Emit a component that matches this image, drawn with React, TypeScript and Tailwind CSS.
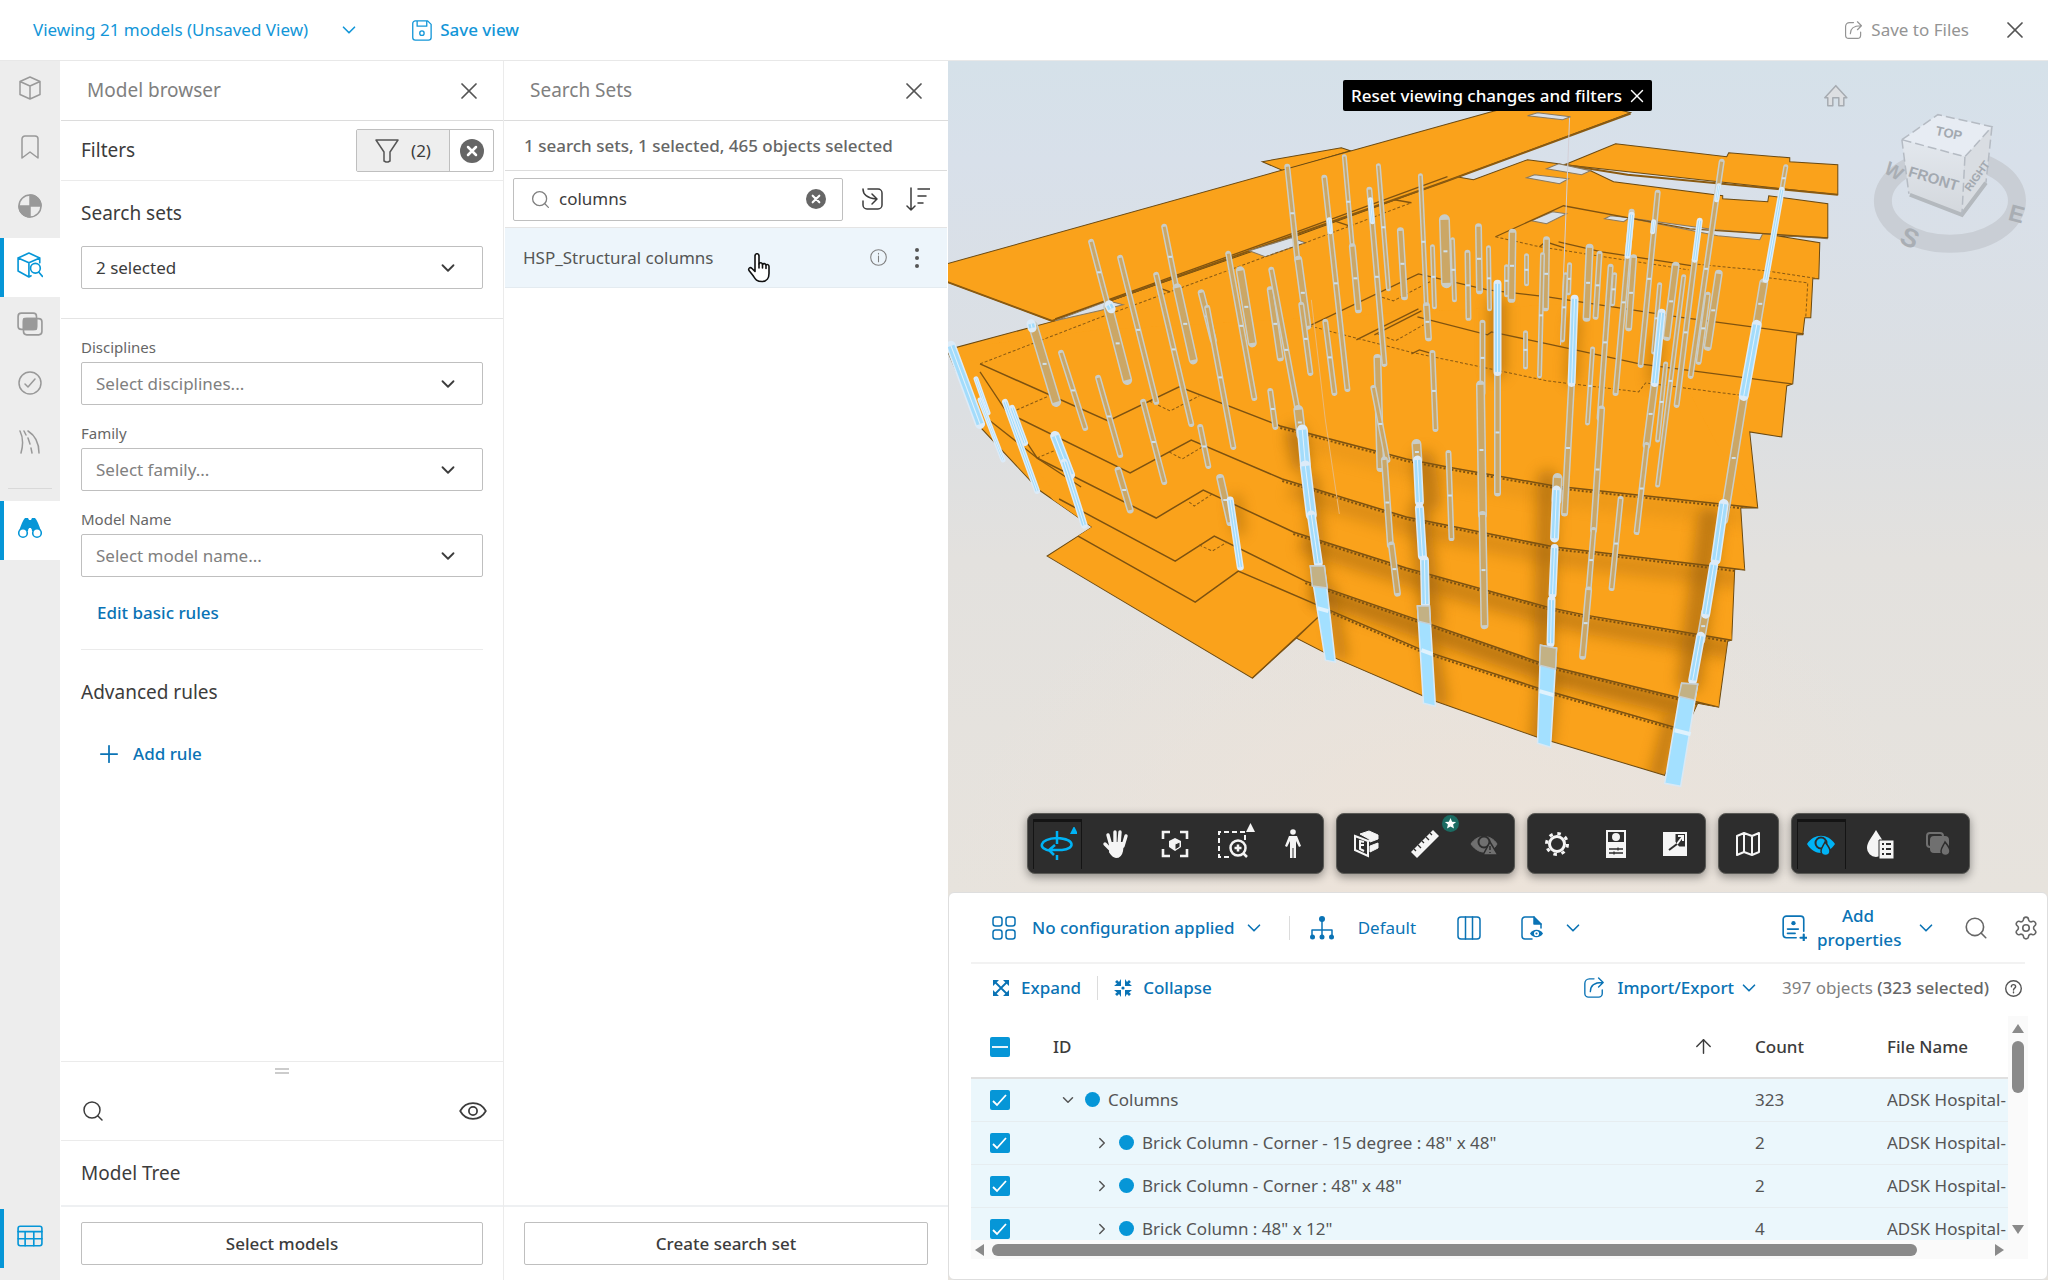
import React, { useState } from 'react';
import { ArrowUp, ChevronDown, ChevronRight, Plus, Search, Settings, X } from 'lucide-react';

type Point = [number, number];
// x1, y1, x2, y2, width
type Column = [number, number, number, number, number];

const toPoints = (points: Point[]) => points.map((p) => p.join(',')).join(' ');

const body: Point[] = [
  [948, 350], [1056, 321], [1250, 251], [1448, 180], [1457, 177], [1474, 180], [1528, 160], [1559, 164], [1591, 171], [1614, 182], [1723, 196], [1723, 199], [1768, 202], [1769, 196],
  [1828, 204], [1828, 238], [1777, 236], [1820, 243], [1819, 279], [1813, 279], [1811, 318], [1805, 318], [1803, 335],
  [1797, 335], [1793, 384], [1787, 386], [1782, 437], [1750, 432], [1758, 508], [1741, 508], [1745, 570],
  [1735, 569], [1732, 640], [1728, 641], [1719, 707], [1698, 703], [1665, 775], [1538, 737], [1436, 701],
  [1336, 658], [1297, 638], [1253, 678], [1048, 556], [1093, 527], [1040, 490], [981, 427],
];

const floors: Point[][] = [
  [[1079, 536], [1196, 602], [1239, 571], [1323, 607], [1423, 650], [1539, 688], [1678, 728], [1690, 725]],
  [[1060, 499], [1176, 561], [1215, 536], [1306, 581], [1419, 620], [1551, 666], [1719, 707]],
  [[1038, 458], [1157, 518], [1204, 490], [1294, 532], [1407, 568], [1548, 607], [1586, 615], [1732, 640]],
  [[1013, 415], [1131, 473], [1192, 440], [1283, 479], [1407, 517], [1555, 547], [1745, 570]],
  [[981, 364], [1109, 421], [1180, 387], [1281, 426], [1407, 459], [1448, 467], [1555, 486], [1758, 508]],
];

const holes: Point[][] = [
  [[1250, 251], [1292, 238], [1306, 243], [1266, 257]],
  [[1056, 321], [1109, 301], [1124, 305], [1100, 311]],
  [[1547, 169], [1559, 164], [1591, 171], [1582, 175]],
  [[1528, 116], [1538, 113], [1571, 117], [1563, 120]],
  [[1527, 178], [1535, 175], [1569, 179], [1560, 184]],
  [[1532, 221], [1553, 212], [1567, 214], [1547, 224]],
  [[1605, 219], [1611, 216], [1630, 218], [1624, 222]],
  [[1628, 218], [1716, 230], [1828, 239], [1763, 234], [1760, 240], [1718, 236]],
];

const edges: Point[][] = [
  [[1310, 326], [1419, 274], [1488, 290], [1548, 297], [1678, 317], [1804, 334]],
  [[1357, 340], [1419, 309]],
  [[1375, 335], [1422, 311]],
  [[1418, 317], [1488, 335], [1492, 332], [1548, 344], [1640, 364], [1792, 384]],
  [[1496, 237], [1564, 206], [1640, 220], [1690, 229], [1828, 238]],
  [[1559, 242], [1602, 252], [1693, 266]],
  [[1540, 247], [1546, 242], [1565, 248]],
  [[981, 372], [1038, 458], [1082, 487]],
  [[990, 420], [1038, 458]],
  [[1056, 319], [1292, 234], [1448, 177]],
  [[1395, 200], [1412, 203]],
  [[1335, 221], [1350, 226]],
  [[1157, 287], [1171, 292]],
  [[1412, 354], [1420, 350], [1430, 353]],
  [[1253, 678], [1323, 613], [1297, 638]],
];

const dashes: Point[][] = [
  [[981, 364], [1100, 318], [1266, 257], [1306, 243], [1412, 203]],
  [[1310, 326], [1410, 352], [1548, 381], [1639, 392], [1646, 383], [1746, 396]],
  [[1013, 412], [1050, 396]],
  [[1150, 401], [1171, 411], [1200, 396]],
  [[1038, 458], [1064, 447]],
  [[1170, 452], [1183, 459], [1203, 447]],
  [[1190, 502], [1195, 506], [1213, 494]],
  [[1200, 545], [1213, 551], [1228, 542]],
  [[1496, 237], [1540, 247], [1689, 270]],
  [[1693, 264], [1766, 271], [1819, 279]],
  [[1769, 278], [1808, 283], [1806, 317]],
  [[1378, 296], [1394, 301], [1436, 279]],
  [[1378, 334], [1396, 341], [1424, 325]],
];

const columns: Column[] = [
  [1092, 242, 1108, 303, 5], [1109, 307, 1128, 380, 9], [1121, 258, 1157, 402, 5], [1165, 227, 1177, 287, 5],
  [1178, 288, 1194, 360, 8], [1157, 275, 1192, 424, 5], [1034, 326, 1057, 402, 9], [1062, 353, 1086, 428, 5],
  [1099, 378, 1121, 455, 5], [1144, 402, 1165, 482, 5], [1202, 293, 1214, 340, 6], [1208, 308, 1234, 447, 5],
  [1229, 254, 1255, 398, 5], [1241, 271, 1253, 343, 8], [1271, 290, 1281, 358, 6], [1272, 270, 1302, 430, 5],
  [1288, 167, 1298, 260, 5], [1299, 260, 1308, 326, 7], [1302, 305, 1311, 373, 5], [1325, 178, 1348, 389, 5],
  [1345, 157, 1353, 247, 4], [1353, 247, 1359, 310, 6], [1370, 190, 1385, 364, 5], [1379, 166, 1389, 289, 4],
  [1421, 176, 1427, 308, 4], [1427, 306, 1429, 338, 6], [1401, 231, 1405, 297, 6], [1445, 220, 1447, 283, 10],
  [1433, 247, 1435, 307, 4], [1453, 240, 1455, 300, 4], [1479, 227, 1480, 291, 6], [1468, 253, 1469, 318, 5],
  [1489, 248, 1490, 309, 4], [1513, 233, 1512, 299, 7], [1507, 267, 1507, 295, 4], [1527, 256, 1527, 284, 4],
  [1498, 372, 1498, 493, 6], [1483, 323, 1483, 393, 5], [1481, 385, 1483, 515, 8], [1483, 515, 1485, 625, 7],
  [1526, 333, 1526, 367, 4], [1433, 353, 1436, 429, 5], [1378, 358, 1381, 468, 7], [1374, 388, 1388, 460, 5],
  [1385, 460, 1391, 545, 6], [1392, 545, 1398, 593, 6], [1326, 322, 1335, 393, 5], [1271, 391, 1276, 427, 5],
  [1201, 427, 1209, 466, 5], [1119, 470, 1131, 510, 6], [1221, 478, 1231, 522, 7], [1722, 162, 1691, 376, 5],
  [1658, 193, 1641, 365, 5], [1632, 212, 1616, 393, 5], [1695, 260, 1677, 405, 5], [1634, 258, 1629, 328, 6],
  [1676, 266, 1667, 337, 7], [1719, 274, 1708, 347, 7], [1590, 248, 1587, 318, 7], [1600, 254, 1596, 317, 5],
  [1611, 267, 1600, 418, 5], [1615, 275, 1613, 304, 4], [1547, 240, 1546, 308, 6], [1543, 255, 1540, 376, 4],
  [1570, 265, 1569, 293, 4], [1566, 275, 1563, 340, 4], [1572, 383, 1565, 513, 6], [1655, 383, 1647, 445, 7],
  [1647, 445, 1637, 532, 5], [1660, 285, 1654, 352, 4], [1684, 277, 1658, 485, 4], [1708, 295, 1699, 362, 5],
  [1666, 364, 1658, 440, 4], [1593, 349, 1588, 423, 4], [1602, 409, 1594, 530, 6], [1594, 530, 1589, 590, 5],
  [1589, 590, 1583, 656, 6], [1621, 499, 1612, 588, 5], [1449, 453, 1452, 538, 5], [1299, 410, 1302, 435, 9],
  [1417, 444, 1418, 460, 9], [1558, 478, 1557, 500, 9], [1764, 283, 1757, 325, 8], [1744, 396, 1724, 520, 8],
  [1786, 167, 1782, 190, 4], [1706, 612, 1701, 640, 8],
];

const glowing: Column[] = [
  [952, 346, 981, 424, 9], [977, 379, 989, 413, 4], [981, 400, 1004, 460, 4], [1006, 402, 1038, 491, 5],
  [1013, 408, 1026, 443, 5], [1056, 436, 1071, 475, 9], [1065, 462, 1085, 525, 6], [1231, 500, 1241, 567, 6],
  [1303, 430, 1306, 464, 10], [1306, 466, 1312, 515, 10], [1312, 515, 1319, 563, 8], [1418, 460, 1420, 502, 8],
  [1420, 508, 1423, 556, 8], [1425, 560, 1426, 604, 8], [1557, 490, 1555, 538, 8], [1555, 548, 1553, 594, 7],
  [1552, 600, 1551, 643, 7], [1498, 284, 1498, 372, 7], [1575, 299, 1572, 383, 7], [1662, 313, 1655, 383, 7],
  [1700, 221, 1695, 260, 5], [1632, 215, 1628, 256, 5], [1330, 220, 1331, 232, 4], [1371, 200, 1373, 222, 4],
  [1782, 190, 1766, 280, 5], [1757, 325, 1744, 396, 9], [1724, 504, 1716, 560, 9], [1714, 565, 1706, 614, 8],
  [1701, 636, 1693, 680, 8], [1719, 186, 1717, 200, 4], [1654, 222, 1653, 232, 4], [1110, 305, 1112, 309, 8],
  [1032, 324, 1033, 328, 8],
];

const feet: Point[][] = [
  [[1311, 566], [1325, 566], [1336, 662], [1326, 660]],
  [[1418, 606], [1430, 606], [1436, 706], [1424, 703]],
  [[1541, 645], [1557, 648], [1551, 747], [1538, 743]],
  [[1682, 683], [1698, 684], [1681, 786], [1665, 783]],
];

const caps: Point[][] = [
  [[1311, 566], [1325, 566], [1328, 588], [1313, 586]],
  [[1418, 606], [1430, 606], [1431, 624], [1419, 621]],
  [[1541, 645], [1557, 648], [1556, 669], [1540, 665]],
  [[1682, 683], [1698, 684], [1695, 700], [1679, 696]],
];

const shadows: Column[] = [
  [1297, 435, 1302, 462, 20], [1424, 462, 1430, 500, 22], [1420, 510, 1432, 620, 20], [1312, 480, 1322, 600, 14],
  [1548, 480, 1544, 660, 20], [1710, 520, 1690, 680, 24], [1498, 305, 1498, 370, 16], [1330, 590, 1342, 655, 12],
  [1430, 640, 1440, 700, 16], [1548, 680, 1542, 740, 22], [1672, 720, 1658, 775, 16], [1236, 500, 1240, 530, 10],
  [1575, 320, 1572, 380, 10], [1658, 340, 1654, 380, 10],
];

const Scene: React.FC = () => {
  return (
    <svg className="block h-full w-full" viewBox="949 61 1099 831" preserveAspectRatio="xMidYMid slice" aria-hidden="true">
      <defs>
        <linearGradient id="sky" x1="0" y1="0" x2="0" y2="1">
          <stop offset="0" stopColor="#d5e1e9" />
          <stop offset="0.12" stopColor="#d8e0ea" />
          <stop offset="0.42" stopColor="#dcdfe2" />
          <stop offset="0.6" stopColor="#e3e1de" />
          <stop offset="1" stopColor="#e7e3dd" />
        </linearGradient>
        <radialGradient id="warm" cx="0.45" cy="1" r="0.45">
          <stop offset="0" stopColor="#ede3d9" />
          <stop offset="1" stopColor="#ede3d9" stopOpacity="0" />
        </radialGradient>
        <clipPath id="bodyClip">
          <polygon points={toPoints(body)} />
        </clipPath>
        <filter id="soft" filterUnits="userSpaceOnUse" x="949" y="61" width="1099" height="831">
          <feGaussianBlur stdDeviation="7" />
        </filter>
        <linearGradient id="face" x1="0" y1="0" x2="0" y2="1">
          <stop offset="0" stopColor="#e3e8ee" />
          <stop offset="1" stopColor="#d3d7dc" />
        </linearGradient>
      </defs>
      <rect x="949" y="61" width="1099" height="831" fill="url(#sky)" />
      <rect x="949" y="61" width="1099" height="831" fill="url(#warm)" />

      <g fill="#faa21b" stroke="#6b4a12" strokeWidth="1">
        <polygon points="1263,162 1342,148 1351,151 1284,171" />
        <polygon points={toPoints(body)} />
      </g>
      <g clipPath="url(#bodyClip)">
        {floors.map((line, i) => (
          <g key={i}>
            {i > 0 && (
              <polyline points={toPoints(line.slice(3))} transform="translate(8 10)" fill="none" stroke="#a8690c" strokeWidth="20" opacity={0.95 - i * 0.2} filter="url(#soft)" />
            )}
            <polygon points={toPoints([...line, [1715, 440], [1640, 300], [1100, 330], [948, 350]])} fill="#faa21b" />
          </g>
        ))}
        <g filter="url(#soft)" stroke="#9c620c" strokeLinecap="round" opacity="0.6">
          {shadows.map(([x1, y1, x2, y2, w], i) => (
            <line key={i} x1={x1} y1={y1} x2={x2} y2={y2} strokeWidth={w} />
          ))}
        </g>
        <g fill="none" stroke="#7d5210" strokeWidth="1.5">
          {floors.map((line, i) => (
            <polyline key={i} points={toPoints(line)} />
          ))}
        </g>
        <g fill="none" stroke="#7d5210" strokeWidth="2" strokeDasharray="2 2">
          {floors.map((line, i) => (
            <polyline key={i} points={toPoints(line.slice(3))} transform="translate(0 2)" />
          ))}
        </g>
      </g>
      <polygon points="948,264 1492,112 1560,95 1631,113 1448,181 1292,238 1053,321 948,282" fill="#faa21b" stroke="#6b4a12" strokeWidth="1" />
      <polyline points="948,282 1053,321 1448,181 1631,114" fill="none" stroke="#8a5a10" strokeWidth="2" />
      <polygon points="1565,165 1616,144 1727,157 1729,153 1790,158 1790,162 1838,165 1838,195" fill="#faa21b" stroke="#6b4a12" strokeWidth="1" />
      <polyline points="1565,165 1628,175 1838,195" fill="none" stroke="#8a5a10" strokeWidth="2" />
      <g fill="#d9e0e8" stroke="#8a7a60" strokeWidth="1">
        {holes.map((hole, i) => (
          <polygon key={i} points={toPoints(hole)} />
        ))}
      </g>
      <g fill="none" stroke="#80530f" strokeWidth="1.3">
        {edges.map((line, i) => (
          <polyline key={i} points={toPoints(line)} />
        ))}
      </g>
      <g fill="none" stroke="#8a5a12" strokeWidth="1" strokeDasharray="3 2">
        {dashes.map((line, i) => (
          <polyline key={i} points={toPoints(line)} />
        ))}
      </g>
      <polyline points="1312,300 1326,420 1340,514" fill="none" stroke="#e8b878" strokeWidth="1" />
      <polyline points="1570,118 1565,250 1561,345" fill="none" stroke="#d3cfd6" strokeWidth="1" />

      {columns.map(([x1, y1, x2, y2, w], i) => (
        <g key={i}>
          <line x1={x1} y1={y1} x2={x2} y2={y2} stroke="#c9cdc8" strokeWidth={w + 1} strokeLinecap="round" />
          <line x1={x1} y1={y1} x2={x2} y2={y2} stroke="#cba766" strokeWidth={w - 2} />
          <line x1={(x1 + x2) / 2 - 2} y1={(y1 + y2) / 2} x2={(x1 + x2) / 2 + 2} y2={(y1 + y2) / 2} stroke="#cfe0ec" strokeWidth="2" />
        </g>
      ))}
      {glowing.map(([x1, y1, x2, y2, w], i) => (
        <g key={i}>
          <line x1={x1} y1={y1} x2={x2} y2={y2} stroke="#dcebf8" strokeWidth={w + 1} strokeLinecap="round" />
          <line x1={x1} y1={y1} x2={x2} y2={y2} stroke="#a3dcfb" strokeWidth={w - 2} />
          <line x1={x1} y1={y1} x2={x2} y2={y2} stroke="#e2f2fd" strokeWidth="1" />
        </g>
      ))}
      <g fill="#a3e0ff" stroke="#d9e9f5" strokeWidth="1.5">
        {feet.map((foot, i) => (
          <polygon key={i} points={toPoints(foot)} />
        ))}
      </g>
      <g fill="#c3b184" stroke="#c6cfd4" strokeWidth="1.5">
        {caps.map((cap, i) => (
          <polygon key={i} points={toPoints(cap)} />
        ))}
      </g>
      <path d="M1318 608l11 3M1422 650l11 4M1540 691l14 4M1675 730l16 4" stroke="#dff2fd" strokeWidth="4" />

      <g>
        <path d="M1825 98l11-12 11 12h-3v8h-5v-8h-6v8h-5v-8z" fill="#dddfe2" stroke="#a6abb1" strokeWidth="1.5" strokeLinejoin="round" />
        <ellipse cx="1950" cy="201" rx="67" ry="43" fill="none" stroke="#c9ced5" strokeWidth="18" />
        <g fill="#a9aeb4" fontFamily="Liberation Sans, sans-serif" fontWeight="bold" textAnchor="middle">
          <text x="1895" y="178" fontSize="19" transform="rotate(30 1895 170)">W</text>
          <text x="1910" y="247" fontSize="26" transform="rotate(25 1910 238)">S</text>
          <text x="2017" y="222" fontSize="23" transform="rotate(15 2017 213)">E</text>
        </g>
        <polygon points="1902,140 1965,157 1962,216 1909,194" fill="url(#face)" />
        <polygon points="1992,127 1965,157 1962,216 1986,183" fill="#d9dde2" />
        <polygon points="1938,115 1992,127 1965,157 1902,140" fill="#e7ecf3" />
        <path d="M1910 195l52 20 24-32" fill="none" stroke="#b4b9be" strokeWidth="4" />
        <path d="M1902 140l36-25 54 12-27 30zM1965 157l-3 58M1902 140l7 54M1992 127l-6 56" fill="none" stroke="#b5bbc3" strokeWidth="1.5" strokeDasharray="9 4" />
        <g fill="#a3a9b0" fontFamily="Liberation Sans, sans-serif" fontWeight="bold" textAnchor="middle">
          <text x="1949" y="138" fontSize="13" transform="rotate(12 1949 134)">TOP</text>
          <text x="1934" y="184" fontSize="15" transform="rotate(17 1934 178)">FRONT</text>
          <text x="1977" y="180" fontSize="11" transform="rotate(-54 1977 176)">RIGHT</text>
        </g>
      </g>
    </svg>
  );
};

interface IconProps {
  size?: number;
  className?: string;
  children: React.ReactNode;
}

const Icon: React.FC<IconProps> = ({ size = 24, className = '', children }) => (
  <svg width={size} height={size} viewBox="0 0 24 24" fill="none" stroke="currentColor" strokeWidth="1.5" strokeLinecap="round" strokeLinejoin="round" className={`shrink-0 ${className}`} aria-hidden="true">
    {children}
  </svg>
);

const ShareIcon = ({ size = 20 }: { size?: number }) => (
  <Icon size={size}>
    <path d="M12 2H7a5 5 0 0 0-5 5v11a4 4 0 0 0 4 4h11a4 4 0 0 0 4-4v-4M8 16c0-6 4-10 13-10M17 1l5 5-5 5" />
  </Icon>
);

const ClearIcon = ({ size = 20 }: { size?: number }) => (
  <svg width={size} height={size} viewBox="0 0 24 24" aria-hidden="true">
    <circle cx="12" cy="12" r="12" fill="#666" />
    <path d="M8 8l8 8M16 8l-8 8" stroke="#fff" strokeWidth="2.5" strokeLinecap="round" />
  </svg>
);

const sideItems = [
  { name: 'Models', active: false, icon: <Icon><path d="M12 1l10 4.500v13L12 23 2 18.500v-13zM2 5.500l10 4.500 10-4.500M12 10v13" /></Icon> },
  { name: 'Views', active: false, icon: <Icon><path d="M4 23V4a3 3 0 0 1 3-3h10a3 3 0 0 1 3 3v19l-8-6z" /></Icon> },
  { name: 'Issues', active: false, icon: <Icon><circle cx="12" cy="12" r="11" /><path d="M12 1a11 11 0 0 1 11 11H12zM12 23A11 11 0 0 1 1 12h11z" fill="currentColor" /></Icon> },
  { name: 'Model browser', active: true, icon: <Icon size={26}><path d="M21 10V5.500L11 1 1 5.500v12L11 23l2-1M1 5.500L11 10l10-4.500M11 10v13" /><circle cx="17" cy="15" r="4.500" /><path d="M20 18.500l3.500 4" /></Icon> },
  { name: 'Clashes', active: false, icon: <Icon size={26}><rect x="1" y="2" width="17" height="15" rx="3" /><rect x="6" y="7" width="17" height="15" rx="3" /><rect x="6" y="7" width="12" height="10" rx="1" fill="currentColor" /></Icon> },
  { name: 'Checks', active: false, icon: <Icon><circle cx="12" cy="12" r="11" /><path d="M7 13l3 3 7-8" /></Icon> },
  { name: 'Alignments', active: false, icon: <Icon><path d="M2 1c3 6 3 15 1 22M10 1c8 5 11 13 11 22M6 1l2 4M10 8l2 6M13 18l1 5" /></Icon> },
];

const SideBar: React.FC = () => {
  return (
    <nav className="flex w-[60px] shrink-0 flex-col bg-[#ededed] text-[#999]">
      {sideItems.map((item) => (
        <button
          key={item.name}
          aria-label={item.name}
          className={item.active
            ? 'flex h-[59px] w-full items-center justify-center border-l-4 border-[#0696d7] bg-white pr-1 pb-1.5 text-[#0696d7]'
            : 'flex h-[59px] w-full items-center justify-center pb-1.5'}
        >
          {item.icon}
        </button>
      ))}
      <hr className="mx-2 mt-3.5 mb-3 border-[#d9d9d9]" />
      <button aria-label="Search sets" className="flex h-[59px] w-full items-center justify-center border-l-4 border-[#0696d7] bg-white pr-1 pb-1.5 text-[#0696d7]">
        <svg width="24" height="22" viewBox="0 0 24 22" fill="currentColor" aria-hidden="true">
          <path d="M7 1h3l1 2h2l1-2h3c2 2 4 7 6 13H14l-1-3h-2l-1 3H1C3 8 5 3 7 1z" />
          <circle cx="5" cy="16" r="4.300" fill="#fff" stroke="currentColor" strokeWidth="1.600" />
          <circle cx="19" cy="16" r="4.300" fill="#fff" stroke="currentColor" strokeWidth="1.600" />
          <rect x="10.500" y="12" width="3" height="2" fill="#fff" />
        </svg>
      </button>
      <button aria-label="Data table" className="mt-auto mb-3 flex h-[59px] w-full items-center justify-center border-l-4 border-[#0696d7] pr-1 pb-1.5 text-[#0696d7]">
        <Icon size={26}>
          <rect x="1" y="3" width="22" height="18" rx="2" />
          <path d="M1 8h22M1 14.500h22M7.500 8v13M15.500 8v13" />
        </Icon>
      </button>
    </nav>
  );
};

const Dropdown = ({ id, label, value, filled = false }: { id: string; label: string; value: string; filled?: boolean }) => (
  <div className="relative">
    <select
      id={id}
      aria-label={label}
      className={filled
        ? 'block h-[43px] w-full appearance-none rounded-xs border border-[#bfbfbf] bg-white px-3.5 text-[17px] text-[#3c3c3c]'
        : 'block h-[43px] w-full appearance-none rounded-xs border border-[#bfbfbf] bg-white px-3.5 text-[17px] text-[#808080]'}
    >
      <option>{value}</option>
    </select>
    <ChevronDown size={22} strokeWidth={2} className="pointer-events-none absolute top-[11px] right-6 text-[#3c3c3c]" />
  </div>
);

const PanelHeader = ({ title }: { title: string }) => (
  <div className="flex h-[60px] shrink-0 items-center justify-between border-b border-[#dcdcdc] pr-5 pl-[26px]">
    <h2 className="text-[19px] text-[#808080]">{title}</h2>
    <button aria-label={`Close ${title}`} className="text-[#555]">
      <X size={28} strokeWidth={1.5} />
    </button>
  </div>
);

const ModelBrowser: React.FC = () => {
  return (
    <section className="flex w-[444px] shrink-0 flex-col border-r border-[#ebebeb] pl-px text-[#3c3c3c]">
      <PanelHeader title="Model browser" />
      <div className="flex h-[60px] shrink-0 items-center justify-between border-b border-[#ebebeb] pr-[9px] pl-5">
        <h3 className="text-[19px]">Filters</h3>
        <div className="flex h-[43px] w-[138px] overflow-hidden rounded-xs border border-[#bfbfbf]">
          <button className="flex flex-1 items-center justify-center gap-3 border-r border-[#bfbfbf] bg-[#eee] text-[17px]">
            <Icon className="text-[#555]"><path d="M1 1h22l-8 12v9l-2 1h-2l-2-1v-9z" /></Icon>
            (2)
          </button>
          <button aria-label="Clear filters" className="flex w-[43px] items-center justify-center">
            <ClearIcon size={24} />
          </button>
        </div>
      </div>
      <div className="border-b border-[#e4e4e4] px-5 pt-[18px] pb-[29px]">
        <label htmlFor="search-sets" className="mb-[19px] block text-[19px] leading-7">Search sets</label>
        <Dropdown id="search-sets" label="Search sets" value="2 selected" filled />
      </div>
      <div className="mx-5 border-b border-[#ebebeb] pt-4">
        <label htmlFor="disciplines" className="block pb-[3px] text-[15px] leading-6 text-[#666]">Disciplines</label>
        <Dropdown id="disciplines" label="Disciplines" value="Select disciplines..." />
        <label htmlFor="family" className="mt-4 block pb-[3px] text-[15px] leading-6 text-[#666]">Family</label>
        <Dropdown id="family" label="Family" value="Select family..." />
        <label htmlFor="model-name" className="mt-4 block pb-[3px] text-[15px] leading-6 text-[#666]">Model Name</label>
        <Dropdown id="model-name" label="Model Name" value="Select model name..." />
        <button className="mt-6 mb-6 ml-4 block text-[17px] leading-6 font-medium text-[#0a73b5]">Edit basic rules</button>
      </div>
      <h3 className="px-5 pt-[28px] text-[19px] leading-7">Advanced rules</h3>
      <button className="mt-[34px] ml-[34px] flex items-center gap-2.5 text-[17px] leading-6 font-medium text-[#0a73b5]">
        <Plus size={28} strokeWidth={1.5} />
        Add rule
      </button>
      <div className="mt-auto flex flex-col items-center border-t border-[#ebebeb]">
        <div className="mt-1.5 h-1.5 w-3.5 border-y-2 border-[#ccc]" />
        <div className="flex h-[67px] w-full items-center justify-between border-b border-[#ebebeb] px-5 pt-2">
          <button aria-label="Search models"><Search size={24} strokeWidth={1.5} /></button>
          <button aria-label="Toggle visibility" className="-mr-1">
            <Icon size={28}><path d="M1 12c5-9 17-9 22 0-5 9-17 9-22 0z" /><circle cx="12" cy="12" r="3.500" /></Icon>
          </button>
        </div>
        <h3 className="flex h-[64px] w-full items-center px-5 text-[19px]">Model Tree</h3>
      </div>
      <div className="flex h-[75px] shrink-0 items-start border-t-2 border-[#eef0f2] px-5 pt-[15px]">
        <button className="h-[43px] w-full rounded-xs border border-[#bfbfbf] text-[17px] font-medium">Select models</button>
      </div>
    </section>
  );
};

const SearchSets: React.FC = () => {
  const [query, setQuery] = useState('columns');
  return (
    <section className="flex w-[444px] shrink-0 flex-col text-[#3c3c3c]">
      <PanelHeader title="Search Sets" />
      <p className="mx-px flex h-[50px] shrink-0 items-center border-b border-[#dcdcdc] pl-[19px] text-[17px] font-medium text-[#666]">
        1 search sets, 1 selected, 465 objects selected
      </p>
      <div className="mx-px flex h-[57px] shrink-0 items-center border-b border-[#e4e4e4] pr-[17px] pl-2">
        <div className="flex h-[43px] w-[330px] items-center gap-2 rounded-xs border border-[#bfbfbf] px-4">
          <Search size={21} strokeWidth={1.5} className="text-[#808080]" />
          <input
            aria-label="Search sets filter"
            value={query}
            onChange={(e) => setQuery(e.target.value)}
            className="min-w-0 flex-1 text-[17px] outline-none"
          />
          <button aria-label="Clear search" onClick={() => setQuery('')}>
            <ClearIcon />
          </button>
        </div>
        <div className="ml-auto flex gap-[22px]">
          <button aria-label="Import search set">
            <Icon><path d="M3 2c0 6 4 9 13 10M12 7l5 5-5 5M8 2h10a4 4 0 0 1 4 4v12a4 4 0 0 1-4 4H7a4 4 0 0 1-4-4v-4" /></Icon>
          </button>
          <button aria-label="Sort">
            <Icon><path d="M5 1v22M1 19l4 4 4-4M12 2h12M12 9h8M12 16h5" /></Icon>
          </button>
        </div>
      </div>
      <div className="relative mx-px flex h-[60px] shrink-0 items-center border-b border-[#e4ebf0] bg-[#edf5fb] pr-6 pl-[18px]">
        <span className="flex-1 text-[17px] text-[#555]">HSP_Structural columns</span>
        <button aria-label="Info" className="mr-6 text-[#808080]">
          <Icon size={17}><circle cx="12" cy="12" r="11" /><path d="M12 10v8M12 6v1" /></Icon>
        </button>
        <button aria-label="More" className="px-1">
          <svg width="4" height="20" viewBox="0 0 4 20" fill="#555" aria-hidden="true">
            <circle cx="2" cy="2" r="2" /><circle cx="2" cy="10" r="2" /><circle cx="2" cy="18" r="2" />
          </svg>
        </button>
        <svg className="absolute top-[25px] left-[242px]" width="24" height="30" viewBox="0 0 24 30" fill="#fff" stroke="#111" strokeWidth="1.600" strokeLinejoin="round" strokeLinecap="round" aria-hidden="true">
          <path d="M8 3c0-3 4-3 4 0v8c1-2 3-1.500 3.500.5 1-1.500 3-1 3.500.5 1-1 3-.5 3 1.500v7c0 4-2 8-7 8-6 0-7-3-9-6l-4-5c-1-2 1-4 3-2l3 3z" />
          <path d="M12 11v4M15.500 12v3M19 12.500v3" fill="none" />
        </svg>
      </div>
      <div className="mt-auto flex h-[75px] shrink-0 items-start border-t-2 border-[#eef0f2] px-5 pt-[15px]">
        <button className="h-[43px] w-full rounded-xs border border-[#bfbfbf] text-[17px] font-medium">Create search set</button>
      </div>
    </section>
  );
};

interface Tool {
  name: string;
  icon: React.ReactNode;
  state?: 'active' | 'disabled';
}

const toolGroups: Tool[][] = [
  [
    { name: 'Orbit', state: 'active', icon: <svg width="40" height="36" viewBox="0 0 40 36" fill="none" stroke="currentColor" strokeWidth="2.500" aria-hidden="true"><path d="M20 4v13M20 28v5M14 24C0 22 2 12 20 11c19 1 18 11 5 12h-11M18 18l-6 5 5 5" /><path d="M33 7l4-8 4 8z" fill="currentColor" stroke="none" /></svg> },
    { name: 'Pan', icon: <svg width="30" height="30" viewBox="0 0 30 30" fill="none" stroke="currentColor" strokeWidth="3.400" strokeLinecap="round" aria-hidden="true"><path d="M10 17L7 6M14 15V3M18 15l1-12M22 17l3-10M10 21l-6-6" /><path d="M10 14h12l-1 8c-1 5-3 6-6 6s-4-2-6-5z" fill="currentColor" strokeWidth="2" /></svg> },
    { name: 'Fit to view', icon: <svg width="30" height="30" viewBox="0 0 30 30" fill="none" stroke="currentColor" strokeWidth="2.600" aria-hidden="true"><path d="M3 10V3h7M20 3h7v7M27 20v7h-7M10 27H3v-7" /><path d="M15 9l6 3v6l-6 4-6-4v-6z" fill="currentColor" stroke="none" /><path d="M15 15v6l5-3v-5z" fill="#2d2d2d" stroke="currentColor" strokeWidth="1" /></svg> },
    { name: 'Zoom window', icon: <svg width="36" height="36" viewBox="0 0 36 36" fill="none" stroke="currentColor" strokeWidth="2" className="overflow-visible" aria-hidden="true"><path d="M13 31H3V6h26v9" strokeDasharray="5 3" /><circle cx="22" cy="22" r="7.500" strokeWidth="2.500" /><path d="M22 18.500v7M18.500 22h7M27 27l4 4" strokeWidth="2.500" /><path d="M30 6l4.500-9L39 6z" fill="currentColor" stroke="none" /></svg> },
    { name: 'First person', icon: <svg width="20" height="30" viewBox="0 0 20 30" fill="currentColor" aria-hidden="true"><circle cx="10" cy="3" r="2.800" /><path d="M6 7h8l4 10-2 1-3-6v17h-2.500V19h-1v10H7V12l-3 6-2-1z" /></svg> },
  ],
  [
    { name: 'Section', icon: <svg width="28" height="28" viewBox="0 0 28 28" fill="none" stroke="currentColor" strokeWidth="2" aria-hidden="true"><path d="M3 6l13 5v15L3 20z" /><path d="M12 12l-4-1v8l4 2M9 15h3" /><path d="M8 4l9-3 9 4v4l-8 3-1-3zM18 16l8-3v5l-8 4z" fill="currentColor" strokeWidth="1" /></svg> },
    { name: 'Measure', icon: <svg width="32" height="32" viewBox="0 0 32 32" aria-hidden="true"><path d="M2 24L24 2l6 6L8 30z" fill="currentColor" /><path d="M5 21l2 2M9 17l3 3M13 13l2 2M17 9l3 3M21 5l2 2" stroke="#2d2d2d" strokeWidth="1.300" /></svg> },
    { name: 'Show markups', state: 'disabled', icon: <svg width="30" height="24" viewBox="0 0 30 24" fill="none" stroke="currentColor" strokeWidth="3" aria-hidden="true"><path d="M2 12C8 2 22 2 28 12c-3 5-6 7-10 8-6 1-12-2-16-8z" fill="currentColor" strokeWidth="1" /><circle cx="15" cy="10" r="5.500" stroke="#2d2d2d" strokeWidth="2" /><path d="M21 10l8 13H14z" fill="currentColor" stroke="#2d2d2d" strokeWidth="1.500" /><path d="M21 14v4M21 20v1" stroke="#2d2d2d" strokeWidth="1.500" /></svg> },
  ],
  [
    { name: 'Settings', icon: <svg width="26" height="26" viewBox="0 0 26 26" fill="none" stroke="currentColor" aria-hidden="true"><circle cx="13" cy="13" r="7.500" strokeWidth="3" /><circle cx="13" cy="13" r="10.500" strokeWidth="3" strokeDasharray="3.500 4.750" /></svg> },
    { name: 'Properties', icon: <svg width="20" height="28" viewBox="0 0 20 28" fill="none" stroke="currentColor" strokeWidth="2" aria-hidden="true"><rect x="1" y="1" width="18" height="12" /><circle cx="10" cy="7" r="3" fill="currentColor" /><rect x="1" y="15" width="18" height="12" fill="currentColor" /><path d="M3 19h14M3 23h14M12 17.500v3M8 21.500v3" stroke="#2d2d2d" strokeWidth="1.300" /></svg> },
    { name: 'Full screen', icon: <svg width="24" height="24" viewBox="0 0 24 24" fill="none" stroke="currentColor" strokeWidth="2" aria-hidden="true"><rect x="1" y="1" width="22" height="22" /><path d="M1 1h11v9l4 5h7v8H1z" fill="currentColor" strokeWidth="1" /><path d="M14 12l6-8M15 4h5v5" /><path d="M6 18l8-6" stroke="#2d2d2d" /></svg> },
  ],
  [
    { name: 'Minimap', icon: <svg width="26" height="26" viewBox="0 0 26 26" fill="none" stroke="currentColor" strokeWidth="2" strokeLinejoin="round" aria-hidden="true"><path d="M2 5l7-3 8 3 7-3v19l-7 3-8-3-7 3zM9 2v19M17 5v19" /></svg> },
  ],
  [
    { name: 'Ghosting', state: 'active', icon: <svg width="30" height="24" viewBox="0 0 30 24" fill="none" aria-hidden="true"><path d="M1 11C8 0 22 0 29 11c-2 3-4 5-6 6-6 5-16 4-22-6z" fill="currentColor" /><circle cx="15" cy="10" r="5.500" stroke="#2d2d2d" strokeWidth="2" /><path d="M19 9c3 4 5 6 5 9a4.500 4.500 0 0 1-9 0c0-3 2-5 4-9z" fill="currentColor" stroke="#2d2d2d" strokeWidth="1.500" /></svg> },
    { name: 'Color theme', icon: <svg width="28" height="30" viewBox="0 0 28 30" fill="currentColor" aria-hidden="true"><path d="M10 1c4 7 9 12 9 18a9 9 0 0 1-18 0C1 13 6 8 10 1z" /><path d="M13 11h15v19H13z" stroke="#2d2d2d" /><path d="M16 15h2M20 15h5M16 20h2M20 20h5M16 25h2M20 25h5" stroke="#2d2d2d" strokeWidth="2" /></svg> },
    { name: 'Overlap', state: 'disabled', icon: <svg width="28" height="26" viewBox="0 0 28 26" fill="none" stroke="currentColor" strokeWidth="2" aria-hidden="true"><rect x="2" y="2" width="16" height="14" rx="3" /><rect x="6" y="6" width="17" height="15" rx="3" fill="currentColor" /><path d="M20 11c3 4 5 6 5 9a4.500 4.500 0 0 1-9 0c0-3 2-5 4-9z" fill="currentColor" stroke="#2d2d2d" strokeWidth="1.500" /></svg> },
  ],
];

const ToolButton = ({ tool }: { tool: Tool }) => {
  let style = 'relative flex h-[50px] w-[59px] items-center justify-center text-[#f5f5f5]';
  if (tool.state === 'active') {
    style = 'relative mx-[5px] flex h-[50px] w-[49px] items-center justify-center border-x border-t-3 border-[#141414] text-[#00b3f5]';
  }
  if (tool.state === 'disabled') {
    style = 'relative flex h-[50px] w-[59px] items-center justify-center text-[#707070]';
  }
  return (
    <button aria-label={tool.name} className={style}>
      {tool.icon}
      {tool.name === 'Measure' && (
        <svg className="absolute -top-1 -right-1" width="17" height="17" viewBox="0 0 17 17" aria-hidden="true">
          <circle cx="8.500" cy="8.500" r="8.500" fill="#1b6b62" />
          <path d="M8.500 3l1.600 3.700 4 .3-3 2.600.9 3.900-3.500-2.100-3.500 2.100.9-3.900-3-2.600 4-.3z" fill="#fff" />
        </svg>
      )}
    </button>
  );
};

const Viewer: React.FC = () => {
  return (
    <div className="relative min-h-0 flex-1 overflow-hidden">
      <Scene />
      <button className="absolute top-[19px] left-[395px] flex h-[31px] items-center gap-1 rounded-xs bg-black pr-1 pl-2 text-[17px] font-medium text-white">
        Reset viewing changes and filters
        <X size={22} strokeWidth={1.5} />
      </button>
      <div className="absolute inset-x-0 bottom-[18px] flex justify-center gap-3">
        {toolGroups.map((group, i) => (
          <div key={i} className="flex h-[61px] items-center rounded-lg border border-[#5a5a56] bg-[#2d2d2d] shadow-[0_3px_10px_rgba(0,0,0,0.4)]">
            {group.map((tool) => (
              <ToolButton key={tool.name} tool={tool} />
            ))}
          </div>
        ))}
      </div>
    </div>
  );
};

const rows = [
  { name: 'Columns', count: 323, open: true },
  { name: 'Brick Column - Corner - 15 degree : 48" x 48"', count: 2, open: false },
  { name: 'Brick Column - Corner : 48" x 48"', count: 2, open: false },
  { name: 'Brick Column : 48" x 12"', count: 4, open: false },
];

const CheckBox = ({ label, partial = false }: { label: string; partial?: boolean }) => (
  <span className="relative block h-5 w-5">
    <input type="checkbox" defaultChecked aria-label={label} className="block h-5 w-5 appearance-none rounded-xs bg-[#0696d7]" />
    <svg className="pointer-events-none absolute inset-0" width="20" height="20" viewBox="0 0 20 20" fill="none" stroke="#fff" strokeWidth="1.800" aria-hidden="true">
      {partial ? <path d="M2 10h16" /> : <path d="M3 11l4 4 9-10" />}
    </svg>
  </span>
);

const ObjectTable: React.FC = () => {
  return (
    <div className="mt-1 mr-[19px] ml-[22px] grid min-h-0 flex-1 grid-cols-[1fr_20px] grid-rows-[1fr_19px]">
      <div className="overflow-hidden">
        <table className="w-full table-fixed border-collapse text-left text-[17px] text-[#555]">
          <colgroup>
            <col className="w-[82px]" />
            <col />
            <col className="w-[132px]" />
            <col className="w-[121px]" />
          </colgroup>
          <thead>
            <tr className="h-[62px] border-b-2 border-[#e0e0e0] text-[#3c3c3c]">
              <th className="pl-[19px]"><CheckBox label="Select all" partial /></th>
              <th className="font-medium">
                <div className="flex items-center justify-between pr-10">
                  ID
                  <ArrowUp size={23} strokeWidth={1.5} />
                </div>
              </th>
              <th className="font-medium">Count</th>
              <th className="font-medium">File Name</th>
            </tr>
          </thead>
          <tbody>
            {rows.map((row) => (
              <tr key={row.name} className="h-[43px] border-b border-[#e6edf0] bg-[#ebf7fc]">
                <td className="pl-[19px]"><CheckBox label={row.name} /></td>
                <td>
                  <div className={row.open ? 'flex items-center pl-1.5' : 'flex items-center pl-10'}>
                    {row.open ? <ChevronDown size={18} strokeWidth={2} /> : <ChevronRight size={18} strokeWidth={2} />}
                    <span className="mx-2 h-[15px] w-[15px] rounded-full bg-[#0696d7]" />
                    {row.name}
                  </div>
                </td>
                <td>{row.count}</td>
                <td className="overflow-hidden whitespace-nowrap">ADSK Hospital-</td>
              </tr>
            ))}
          </tbody>
        </table>
      </div>
      <div className="flex flex-col items-center bg-[#fafafa] pt-2 pb-1.5">
        <svg width="12" height="9" viewBox="0 0 12 9" fill="#8a8a8a" aria-hidden="true"><path d="M6 0l6 9H0z" /></svg>
        <div className="mt-2 h-[52px] w-3 rounded-full bg-[#8a8a8a]" />
        <svg className="mt-auto" width="12" height="9" viewBox="0 0 12 9" fill="#8a8a8a" aria-hidden="true"><path d="M6 9l6-9H0z" /></svg>
      </div>
      <div className="flex items-center bg-[#fafafa] px-1">
        <svg width="9" height="12" viewBox="0 0 9 12" fill="#8a8a8a" aria-hidden="true"><path d="M0 6l9-6v12z" /></svg>
        <div className="mx-2 flex-1">
          <div className="h-3 w-[93%] rounded-full bg-[#8a8a8a]" />
        </div>
        <svg width="9" height="12" viewBox="0 0 9 12" fill="#8a8a8a" aria-hidden="true"><path d="M9 6L0 0v12z" /></svg>
      </div>
      <div className="bg-[#fafafa]" />
    </div>
  );
};

const DataPanel: React.FC = () => {
  return (
    <section className="flex h-[388px] shrink-0 flex-col rounded-md border border-[#dedede] bg-white pb-5 text-[17px] text-[#0a73b5]">
      <div className="ml-[22px] flex h-[69px] shrink-0 items-center pr-2 pl-[21px] font-medium">
        <button className="flex items-center gap-4">
          <Icon><rect x="1" y="1" width="9" height="9" rx="2.500" /><rect x="14" y="1" width="9" height="9" rx="2.500" /><rect x="1" y="14" width="9" height="9" rx="2.500" /><rect x="14" y="14" width="9" height="9" rx="2.500" /></Icon>
          No configuration applied
          <ChevronDown size={22} strokeWidth={1.8} className="-ml-2" />
        </button>
        <div className="mr-5 ml-6 h-6 w-px shrink-0 bg-[#dcdcdc]" />
        <button className="flex items-center gap-6 font-normal">
          <Icon><path d="M12 3v18M2 21v-7h20v7" /><g fill="currentColor" stroke="none"><circle cx="12" cy="3" r="3" /><circle cx="2.500" cy="21" r="2.500" /><circle cx="12" cy="21" r="2.500" /><circle cx="21.500" cy="21" r="2.500" /></g></Icon>
          Default
        </button>
        <button aria-label="Columns" className="ml-[41px]">
          <Icon><rect x="1" y="1" width="22" height="22" rx="3" /><path d="M8.500 1v22M15.500 1v22" /></Icon>
        </button>
        <button aria-label="File visibility" className="ml-[39px] flex items-center gap-5">
          <Icon><path d="M12 23H5a3 3 0 0 1-3-3V4a3 3 0 0 1 3-3h9M21 8v4" /><path d="M14 1l7 7h-7z" fill="currentColor" /><path d="M10 17.500c3-5 10-5 13 0-3 5-10 5-13 0z" fill="currentColor" stroke="none" /><circle cx="16.500" cy="17.500" r="1.800" fill="none" stroke="#fff" /></Icon>
          <ChevronDown size={22} strokeWidth={1.8} className="-ml-0.5" />
        </button>
        <button className="ml-auto flex items-center gap-2.5 leading-6">
          <Icon size={26}><path d="M14 21H5a3 3 0 0 1-3-3V4a3 3 0 0 1 3-3h13a3 3 0 0 1 3 3v11M6 13h10M6 17h7" /><circle cx="11.500" cy="7.500" r="2" fill="currentColor" stroke="none" /><path d="M21 18v6M18 21h6" strokeWidth="2" /></Icon>
          <span className="w-[82px]">Add properties</span>
          <ChevronDown size={22} strokeWidth={1.8} className="ml-1.5" />
        </button>
        <button aria-label="Search table" className="ml-[26px] text-[#666]"><Search size={26} strokeWidth={1.5} /></button>
        <button aria-label="Table settings" className="ml-6 text-[#666]"><Settings size={26} strokeWidth={1.5} /></button>
      </div>
      <div className="mx-[22px] flex h-[50px] shrink-0 items-center border-t-2 border-[#f2f2f2] pl-[21px] font-medium">
        <button className="flex items-center gap-[11px]">
          <svg width="18" height="18" viewBox="0 0 18 18" fill="currentColor" stroke="currentColor" aria-hidden="true"><path d="M3 3l12 12M15 3L3 15" strokeWidth="1.800" /><path d="M1 1h6L1 7zM17 1v6l-6-6zM17 17h-6l6-6zM1 17v-6l6 6z" stroke="none" /></svg>
          Expand
        </button>
        <div className="mx-4 h-6 w-px shrink-0 bg-[#dcdcdc]" />
        <button className="flex items-center gap-[11px]">
          <svg width="18" height="18" viewBox="0 0 18 18" fill="currentColor" aria-hidden="true">
            <path d="M7 7H0l3-2.500L1 3l2-2 2 2 2-3zM11 7h7l-3-2.500L17 3l-2-2-2 2-2-3zM7 11H0l3 2.500L1 15l2 2 2-2 2 3zM11 11h7l-3 2.500 2 1.500-2 2-2-2-2 3z" />
            <circle cx="9" cy="9" r="1.600" />
          </svg>
          Collapse
        </button>
        <button className="ml-auto flex items-center gap-3">
          <ShareIcon size={22} />
          Import/Export
          <ChevronDown size={22} strokeWidth={1.8} className="-ml-2" />
        </button>
        <p className="ml-[22px] font-normal text-[#808080]">
          397 objects <span className="font-medium text-[#666]">(323 selected)</span>
        </p>
        <button aria-label="Help" className="mr-[3px] ml-4 text-[#555]">
          <Icon size={17}><circle cx="12" cy="12" r="11" strokeWidth="2" /><path d="M9 9.500c0-4 6-4 6 0 0 2-3 2-3 4.500M12 17v1" strokeWidth="2" /></Icon>
        </button>
      </div>
      <ObjectTable />
    </section>
  );
};

const TopBar: React.FC = () => {
  return (
    <header className="flex h-[61px] shrink-0 items-center border-b border-[#e8e8e8] pr-[19px] pl-[33px] text-[17px] text-[#1296d8]">
      <button className="flex items-center gap-[30px]">
        Viewing 21 models (Unsaved View)
        <ChevronDown size={22} strokeWidth={1.8} />
      </button>
      <button className="ml-[51px] flex items-center gap-2 font-medium">
        <Icon size={21}><path d="M2 4a3 3 0 0 1 3-3h14l4 4v15a3 3 0 0 1-3 3H5a3 3 0 0 1-3-3zM7 1v6h11V1" /><circle cx="12.500" cy="15" r="2.500" /></Icon>
        Save view
      </button>
      <button className="ml-auto flex items-center gap-2 text-[#949494]">
        <ShareIcon size={19} />
        Save to Files
      </button>
      <button aria-label="Close" className="ml-8 text-[#555]">
        <X size={28} strokeWidth={1.5} />
      </button>
    </header>
  );
};

const App: React.FC = () => {
  return (
    <div className="flex h-screen flex-col bg-white font-['Noto_Sans',sans-serif]">
      <TopBar />
      <div className="flex min-h-0 flex-1">
        <SideBar />
        <ModelBrowser />
        <SearchSets />
        <main className="flex min-w-0 flex-1 flex-col bg-[#e7e3dd]">
          <Viewer />
          <DataPanel />
        </main>
      </div>
    </div>
  );
};

export default App;
